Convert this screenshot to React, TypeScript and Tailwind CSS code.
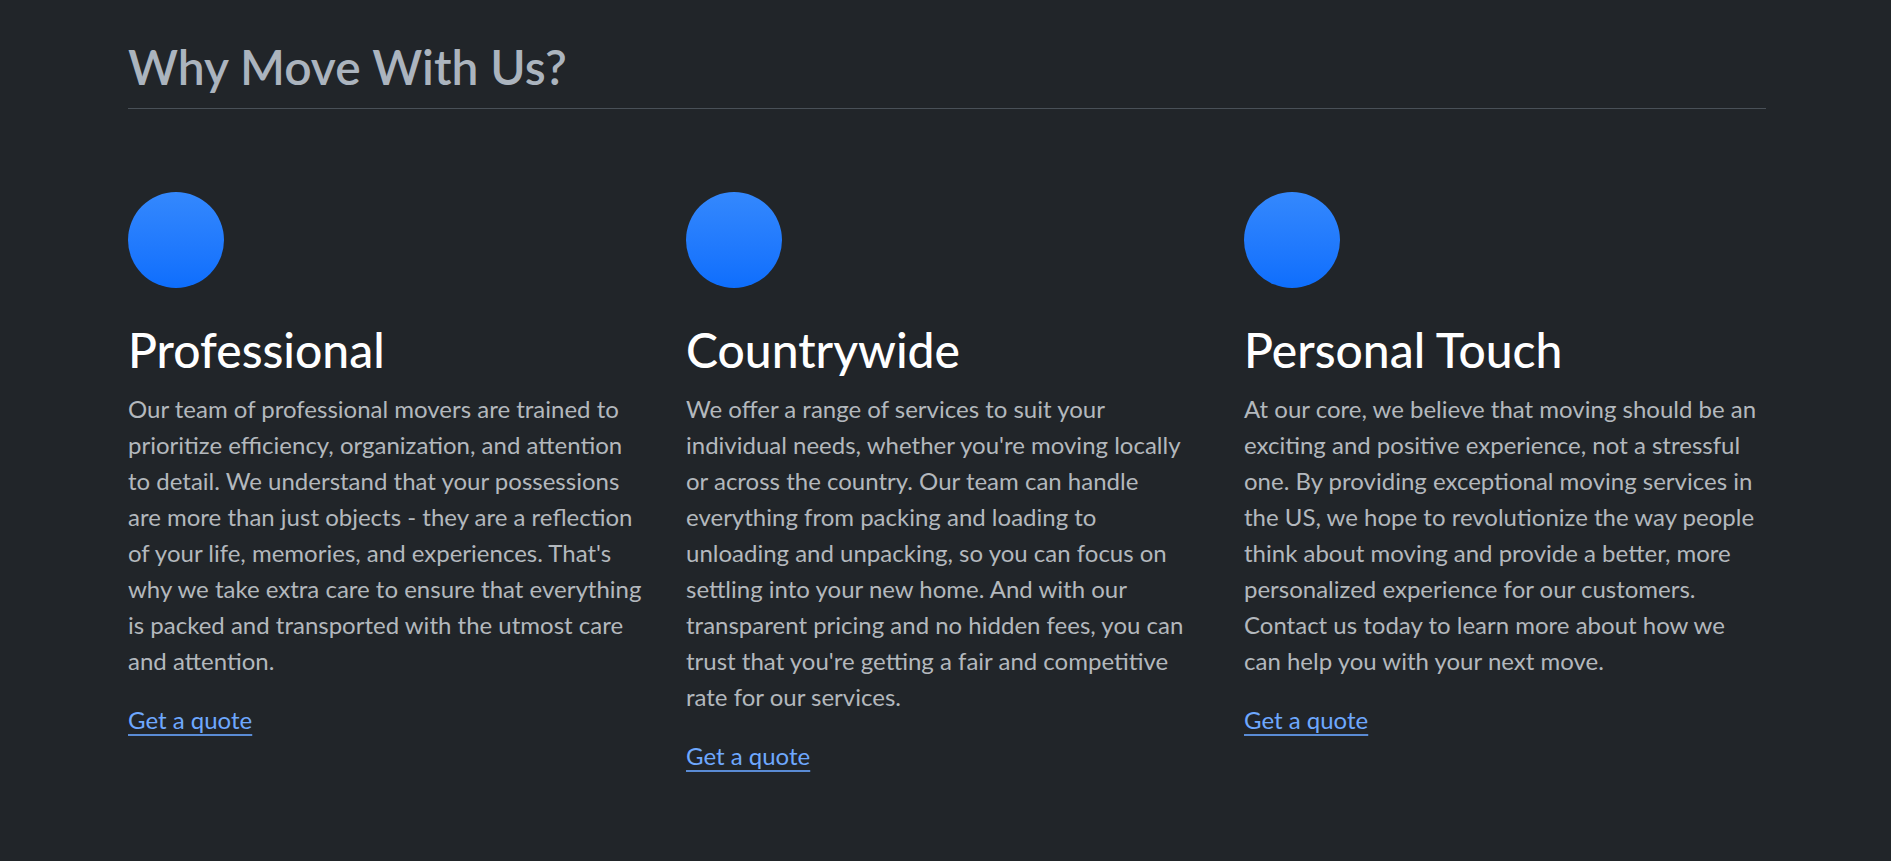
import * as React from "react";

type Feature = {
  title: string;
  body: string;
};

const features: Feature[] = [
  {
    title: "Professional",
    body: "Our team of professional movers are trained to prioritize efficiency, organization, and attention to detail. We understand that your possessions are more than just objects - they are a reflection of your life, memories, and experiences. That's why we take extra care to ensure that everything is packed and transported with the utmost care and attention.",
  },
  {
    title: "Countrywide",
    body: "We offer a range of services to suit your individual needs, whether you're moving locally or across the country. Our team can handle everything from packing and loading to unloading and unpacking, so you can focus on settling into your new home. And with our transparent pricing and no hidden fees, you can trust that you're getting a fair and competitive rate for our services.",
  },
  {
    title: "Personal Touch",
    body: "At our core, we believe that moving should be an exciting and positive experience, not a stressful one. By providing exceptional moving services in the US, we hope to revolutionize the way people think about moving and provide a better, more personalized experience for our customers. Contact us today to learn more about how we can help you with your next move.",
  },
];

function FeatureCard({ title, body }: Feature) {
  return (
    <div className="flex flex-col items-start">
      <div className="mb-[33px] h-[96px] w-[96px] rounded-full bg-gradient-to-b from-[#3488fd] to-[#0d6efd]" />
      <h3 className="mb-[13px] text-[48px] font-medium leading-[1.2] text-white">
        {title}
      </h3>
      <p className="mb-[23px] max-w-[518px] text-[24px] leading-[36px] text-[#b3b8bd]">
        {body}
      </p>
      <a
        href="#"
        className="text-[24px] leading-[36px] text-[#6ea8fe] underline decoration-[#5a8bd4] underline-offset-[5px]"
      >
        Get a quote
      </a>
    </div>
  );
}

export default function App() {
  return (
    <div
      className="min-h-screen bg-[#212529]"
      style={{ fontFamily: 'Lato, "Noto Sans", sans-serif' }}
    >
      <div className="pl-[128px] pr-[125px] pt-[38px]">
        <h2 className="border-b border-[#495057] pb-[12px] text-[48px] font-semibold leading-[1.2] text-[#abb4be]">
          Why Move With Us?
        </h2>

        <div className="grid grid-cols-3 gap-x-[36px] pt-[83px]">
          {features.map((f) => (
            <FeatureCard key={f.title} {...f} />
          ))}
        </div>
      </div>
    </div>
  );
}
